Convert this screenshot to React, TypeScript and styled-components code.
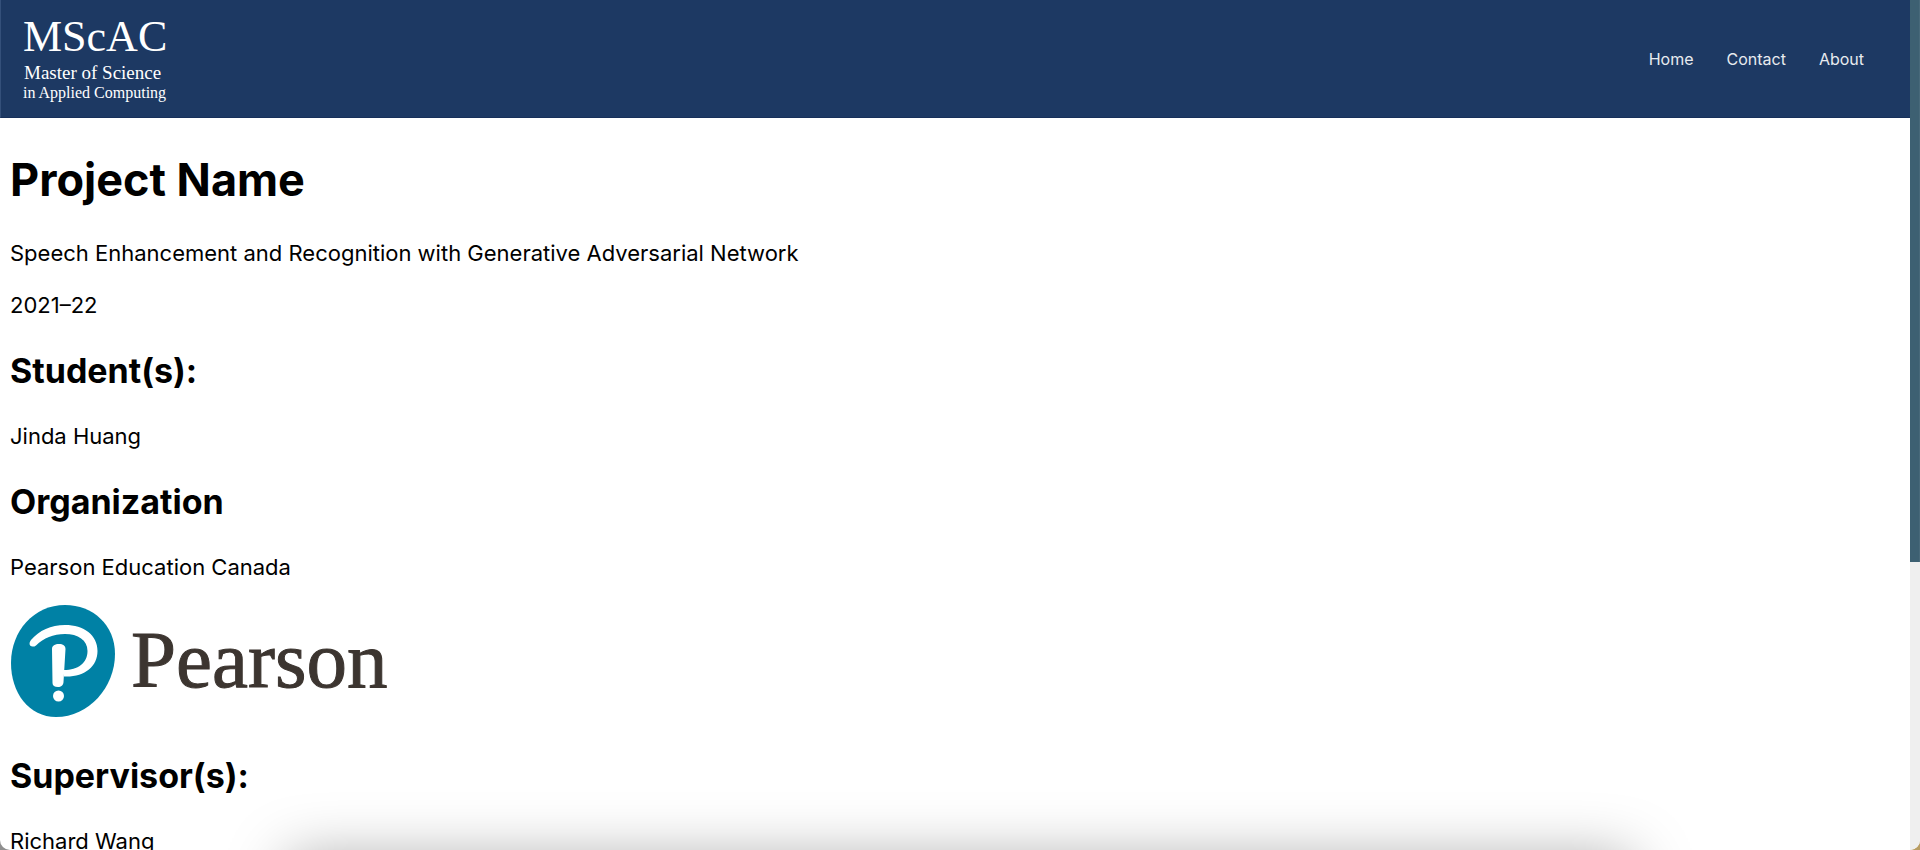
import React from "react";
import styled, { createGlobalStyle } from "styled-components";

const GlobalStyle = createGlobalStyle`
  * { box-sizing: border-box; }
  body {
    margin: 0;
    background: linear-gradient(90deg, #8f8f8f 50%, #b99d62 50%);
    color: #000;
    font-family: Inter, "Liberation Sans", sans-serif;
    font-size: 22px;
    line-height: 28px;
  }
`;

const Window = styled.div`
  position: relative;
  display: flex;
  height: 100vh;
  overflow: hidden;
  background: #fff;
  border-radius: 0 0 10px 10px;
`;

const Page = styled.div`
  flex: 1;
  min-width: 0;
  overflow: hidden;
`;

const Header = styled.header`
  display: flex;
  align-items: center;
  justify-content: space-between;
  height: 118px;
  padding: 0 46px 0 22px;
  background: #1d3963;
  border-left: 1px solid #34507a;
  border-bottom: 1px solid #17305a;
`;

const HomeLink = styled.a`
  display: block;
  height: 92px;
`;

const Nav = styled.nav`
  display: flex;
  gap: 33px;
`;

const NavLink = styled.a`
  color: #e8ebef;
  font-size: 16px;
  line-height: 20px;
  text-decoration: none;
`;

const Content = styled.main`
  padding: 33px 10px;
`;

const Title = styled.h1`
  margin: 0 0 31px;
  font-size: 45px;
  line-height: 57px;
`;

const Heading = styled.h2`
  margin: 30px 0;
  font-size: 34px;
  line-height: 43px;
`;

const Text = styled.p`
  margin: 24px 0;
`;

const Logo = styled.svg`
  display: block;
  font-family: "Liberation Serif", serif;
`;

const Figure = styled.div`
  padding-bottom: 6px;
`;

const ScrollTrack = styled.div`
  width: 10px;
  background: #efefef;
`;

const ScrollThumb = styled.div`
  height: 66.1%;
  background: #3d6072;
  border-right: 1px solid #48697a;
`;

const DockShadow = styled.div`
  position: absolute;
  left: 15%;
  right: 15%;
  top: 100%;
  height: 80px;
  box-shadow: 0 8px 60px rgba(0, 0, 0, 0.34);
`;

const links = ["Home", "Contact", "About"];

function ProgramLogo() {
  return (
    <Logo width="144" height="92" viewBox="0 0 144 92" fill="#fff" role="img" aria-label="MScAC Master of Science in Applied Computing">
      <text x="0" y="38" fontSize="44">MScAC</text>
      <text x="1" y="66" fontSize="19">Master of Science</text>
      <text x="0" y="85" fontSize="16">in Applied Computing</text>
    </Logo>
  );
}

function PearsonLogo() {
  return (
    <Logo width="382" height="113" viewBox="0 0 382 113" role="img" aria-label="Pearson">
      <path
        d="M55 0C83 0 105 20 105 49C105 82 79 112 46 112C19 112 1 88 1 58C1 26 24 0 55 0Z"
        fill="#0081a5"
      />
      <g fill="#fff">
        <path d="M22.500 41.500C19.500 41.500 18.500 38 21 35C29 25.500 41 20 55 20C74 20 87.500 30 87.500 46C87.500 62 74 72.500 54 71.500L54 65C68 65 77.500 58 77.500 46C77.500 35 68 29 55 29C43 29 34 33 26 40.500C25 41.500 24 41.500 22.500 41.500Z" />
        <path d="M42 44C42 40.500 45 39 49 39C53 39 55.500 40.500 55.500 44L53.500 77C53.500 80 51 82 48 82C44.500 82 42.500 80.500 42.500 78Z" />
        <circle cx="48.500" cy="91" r="5.500" />
      </g>
      <text x="121" y="82" fontSize="81" fill="#3c3530" stroke="#3c3530" strokeWidth="1">
        Pearson
      </text>
    </Logo>
  );
}

export default function App() {
  return (
    <>
      <GlobalStyle />
      <Window>
        <Page>
          <Header>
            <HomeLink href="#home">
              <ProgramLogo />
            </HomeLink>
            <Nav aria-label="Main">
              {links.map((link) => (
                <NavLink key={link} href={`#${link.toLowerCase()}`}>
                  {link}
                </NavLink>
              ))}
            </Nav>
          </Header>
          <Content>
            <Title>Project Name</Title>
            <Text>Speech Enhancement and Recognition with Generative Adversarial Network</Text>
            <Text>2021–22</Text>
            <Heading>Student(s):</Heading>
            <Text>Jinda Huang</Text>
            <Heading>Organization</Heading>
            <Text>Pearson Education Canada</Text>
            <Figure>
              <PearsonLogo />
            </Figure>
            <Heading>Supervisor(s):</Heading>
            <Text>Richard Wang</Text>
          </Content>
        </Page>
        <ScrollTrack>
          <ScrollThumb />
        </ScrollTrack>
        <DockShadow />
      </Window>
    </>
  );
}
